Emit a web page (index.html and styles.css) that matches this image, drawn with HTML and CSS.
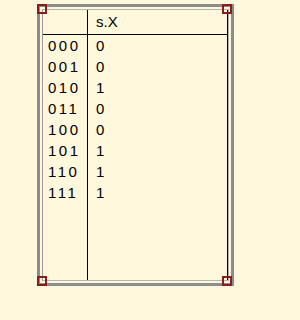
FILE: index.html
```html
<!DOCTYPE html>
<html>
<head>
<meta charset="utf-8">
<link rel="stylesheet" href="styles.css">
</head>
<body>
<div class="frame">
  <div class="inner">
    <div class="col col-key">
      <div class="head"></div>
      <div class="cell key">000</div>
      <div class="cell key">001</div>
      <div class="cell key">010</div>
      <div class="cell key">011</div>
      <div class="cell key">100</div>
      <div class="cell key">101</div>
      <div class="cell key">110</div>
      <div class="cell key">111</div>
    </div>
    <div class="col col-val">
      <div class="head val">s.X</div>
      <div class="cell val">0</div>
      <div class="cell val">0</div>
      <div class="cell val">1</div>
      <div class="cell val">0</div>
      <div class="cell val">0</div>
      <div class="cell val">1</div>
      <div class="cell val">1</div>
      <div class="cell val">1</div>
    </div>
  </div>
  <span class="corner tl"></span>
  <span class="corner tr"></span>
  <span class="corner bl"></span>
  <span class="corner br"></span>
</div>
</body>
</html>
```
FILE: styles.css
```css
html, body {
  margin: 0;
  padding: 0;
  background: #fff8dc;
}
body {
  font-family: "Liberation Sans", Arial, sans-serif;
  font-size: 15px;
  color: #000;
}
.frame {
  position: relative;
  box-sizing: border-box;
  margin: 4px 0 0 37px;
  width: 197px;
  height: 282px;
  border: 3px solid #8c8c8c;
  padding: 2px;
}
.inner {
  box-sizing: border-box;
  height: 100%;
  display: flex;
  border-top: 1px solid #b4b4b4;
  border-left: 1px solid #9a9a9a;
  border-bottom: 1px solid #b4b4b4;
  border-right: 1px solid #b4b4b4;
}
.col {
  display: flex;
  flex-direction: column;
}
.col-key {
  width: 44px;
  border-right: 1px solid #000;
}
.col-val {
  flex: 1;
  border-right: 1px solid #000;
}
.head {
  height: 24px;
  line-height: 24px;
  border-bottom: 1px solid #000;
}
.cell {
  height: 21px;
  line-height: 21px;
}
.key {
  padding-left: 5px;
  letter-spacing: 2.5px;
}
.val {
  padding-left: 8px;
}
.corner {
  position: absolute;
  box-sizing: border-box;
  width: 10px;
  height: 10px;
  border: 2px solid #8b1c1c;
}
.tl { top: -3px; left: -3px; }
.tr { top: -3px; right: -1px; }
.bl { bottom: -3px; left: -3px; }
.br { bottom: -3px; right: -1px; }
```
